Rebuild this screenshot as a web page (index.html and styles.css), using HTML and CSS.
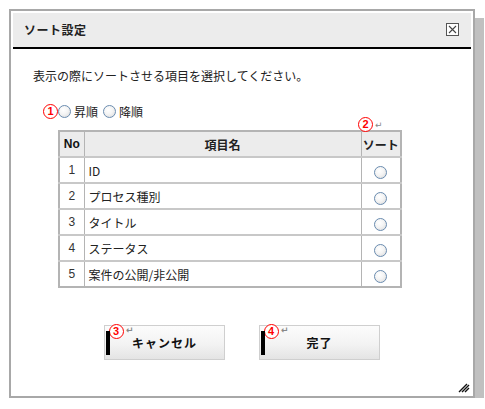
FILE: index.html
```html
<!DOCTYPE html>
<html lang="ja">
<head>
<meta charset="utf-8">
<link rel="stylesheet" href="styles.css">
</head>
<body>
<div class="stage">
  <div class="dialog">
    <div class="header">
      <span class="title">ソート設定</span>
      <span class="close" aria-label="close">
        <svg width="13" height="13" viewBox="0 0 13 13"><rect x="0.5" y="0.5" width="12" height="12" fill="#fff" stroke="#555"/><path d="M3 3 L10 10 M10 3 L3 10" stroke="#444" stroke-width="1.1"/></svg>
      </span>
    </div>
    <div class="body">
      <p class="lead">表示の際にソートさせる項目を選択してください。</p>
      <div class="order">
        <span class="mark">1</span><span class="radio"></span><span class="label">昇順</span><span class="radio"></span><span class="label">降順</span>
      </div>
      <div class="table-wrap">
        <span class="mark mark-abs m2">2</span><span class="ret r2">↵</span>
        <table class="sort-table">
          <thead>
            <tr><th class="c-no">No</th><th class="c-name">項目名</th><th class="c-sort">ソート</th></tr>
          </thead>
          <tbody>
            <tr><td class="c-no">1</td><td class="c-name">ID</td><td class="c-sort"><span class="radio"></span></td></tr>
            <tr><td class="c-no">2</td><td class="c-name">プロセス種別</td><td class="c-sort"><span class="radio"></span></td></tr>
            <tr><td class="c-no">3</td><td class="c-name">タイトル</td><td class="c-sort"><span class="radio"></span></td></tr>
            <tr><td class="c-no">4</td><td class="c-name">ステータス</td><td class="c-sort"><span class="radio"></span></td></tr>
            <tr><td class="c-no">5</td><td class="c-name">案件の公開/非公開</td><td class="c-sort"><span class="radio"></span></td></tr>
          </tbody>
        </table>
      </div>
      <div class="buttons">
        <div class="btn"><span class="mark mark-abs bm">3</span><span class="ret br">↵</span><span class="bar"></span>キャンセル</div>
        <div class="btn"><span class="mark mark-abs bm">4</span><span class="ret br">↵</span><span class="bar"></span>完了</div>
      </div>
    </div>
    <span class="grip">
      <svg width="12" height="11" viewBox="0 0 12 11"><path d="M1 10 L9 2 M4 10 L11 3 M7 10 L11 6" stroke="#111" stroke-width="1.4"/></svg>
    </span>
  </div>
</div>
</body>
</html>
```

FILE: styles.css
```css
* { box-sizing: border-box; }
html, body { margin: 0; padding: 0; background: #fff; }
body {
  font-family: "Noto Sans CJK JP", "Liberation Sans", sans-serif;
  font-size: 12px;
  color: #222;
}
.stage { padding: 9px 0 0 9px; }
.dialog {
  position: relative;
  width: 466px;
  height: 389px;
  border: 2px solid #a8a8a8;
  padding: 2px;
  background: #fff;
  box-shadow: 9px 9px 0 #c0c0c0;
}
.header {
  height: 36px;
  background: #ececec;
  border-bottom: 2px solid #000;
  display: flex;
  align-items: center;
  justify-content: space-between;
  padding: 0 12px 2px 11px;
}
.title { font-weight: bold; font-size: 12px; letter-spacing: 0.5px; }
.close { display: flex; }
.body { padding: 0 0 0 20px; }
.lead { margin: 18px 0 0 0; line-height: 18px; }
.order {
  display: flex;
  align-items: center;
  margin: 18px 0 0 10px;
  height: 16px;
}
.label { margin: 0 5px 0 3px; }
.mark {
  display: inline-flex;
  align-items: center;
  justify-content: center;
  width: 15px;
  height: 15px;
  border: 1.5px solid #f00;
  border-radius: 50%;
  color: #f00;
  font-weight: bold;
  font-size: 11px;
  line-height: 1;
  font-family: "Liberation Sans", sans-serif;
  background: #fff;
}
.radio {
  display: inline-block;
  width: 13px;
  height: 13px;
  border: 1px solid #6a8cb0;
  border-radius: 50%;
  background: radial-gradient(circle at 40% 35%, #ffffff 0%, #f4f4f4 45%, #d8d8d8 100%);
}
.table-wrap { position: relative; margin: 11px 0 0 25px; width: 344px; }
.sort-table {
  width: 344px;
  border-collapse: collapse;
  border: 2px solid #b4b4b4;
}
.sort-table th, .sort-table td {
  border: 1px solid #b4b4b4;
  height: 26px;
  padding: 0 5px;
  white-space: nowrap;
}
.sort-table thead th {
  background: #ececec;
  font-weight: bold;
  height: 26px;
  text-align: center;
}
.sort-table tbody td { border-top: 2px solid #c8c8c8; }
.c-no { width: 25px; text-align: center; }
th.c-no { font-family: "Liberation Sans", sans-serif; font-size: 12px; color: #111; padding: 0; }
td.c-no { color: #333; padding: 0; font-family: "Liberation Sans", sans-serif; }
.c-sort { width: 40px; text-align: center; }
th.c-sort { padding: 0; }
td.c-sort { padding: 0; }
td.c-sort .radio { vertical-align: middle; }
td.c-name { padding-left: 4px; }
.mark-abs { position: absolute; }
.m2 { left: 300px; top: -13px; }
.ret { position: absolute; color: #888; font-size: 9px; line-height: 1; font-family: "DejaVu Sans", sans-serif; }
.r2 { left: 317px; top: -9px; }
.buttons {
  display: flex;
  gap: 34px;
  margin: 37px 0 0 71px;
}
.btn {
  position: relative;
  width: 121px;
  height: 35px;
  border: 1px solid #cfcfcf;
  background: linear-gradient(#fcfcfc 0%, #f3f3f3 55%, #e4e4e4 100%);
  display: flex;
  align-items: center;
  justify-content: center;
  font-weight: bold;
  font-size: 12px;
  letter-spacing: 1px;
  color: #111;
}
.bar {
  position: absolute;
  left: 1px;
  top: 5px;
  width: 4px;
  height: 24px;
  background: #000;
}
.bm { left: 4px; top: -2px; }
.br { left: 21px; top: 0px; }
.grip { position: absolute; right: 3px; bottom: 3px; display: flex; }
```
